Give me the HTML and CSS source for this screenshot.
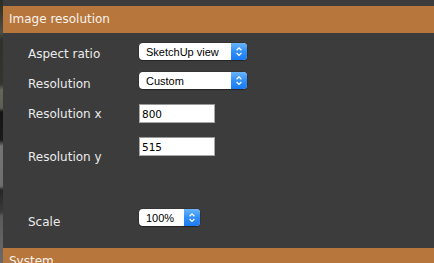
FILE: index.html
```html
<!DOCTYPE html>
<html lang="en">
<head>
  <meta charset="UTF-8">
  <meta name="viewport" content="width=device-width, initial-scale=1.0">
  <title>Image resolution</title>
  <link rel="stylesheet" href="styles.css">
</head>
<body>
  <div class="window">
    <div class="backdrop"></div>
    <div class="panel">
      <div class="section-title">Image resolution</div>

      <div class="settings">
        <label class="label drop-4" for="aspect">Aspect ratio</label>
        <div class="select wide">
          <select id="aspect"><option>SketchUp view</option></select>
          <span class="stepper">
            <svg width="16" height="17" viewBox="0 0 16 17"><path d="M5.6 7.2 L8 4.8 L10.4 7.2 M5.6 10 L8 12.4 L10.4 10" fill="none" stroke="#fff" stroke-width="1.3"/></svg>
          </span>
        </div>

        <label class="label drop-5" for="resolution">Resolution</label>
        <div class="select wide">
          <select id="resolution"><option>Custom</option></select>
          <span class="stepper">
            <svg width="16" height="17" viewBox="0 0 16 17"><path d="M5.6 7.2 L8 4.8 L10.4 7.2 M5.6 10 L8 12.4 L10.4 10" fill="none" stroke="#fff" stroke-width="1.3"/></svg>
          </span>
        </div>

        <label class="label drop-3" for="resX">Resolution x</label>
        <input class="field" type="text" id="resX" value="800">

        <label class="label drop-13" for="resY">Resolution y</label>
        <input class="field" type="text" id="resY" value="515">

        <label class="label drop-6" for="scale">Scale</label>
        <div class="select narrow">
          <select id="scale"><option>100%</option></select>
          <span class="stepper">
            <svg width="16" height="17" viewBox="0 0 16 17"><path d="M5.6 7.2 L8 4.8 L10.4 7.2 M5.6 10 L8 12.4 L10.4 10" fill="none" stroke="#fff" stroke-width="1.3"/></svg>
          </span>
        </div>
      </div>

      <div class="section-title">System</div>
    </div>
  </div>
</body>
</html>
```

FILE: styles.css
```css
body {
  margin: 0;
  height: 263px;
  overflow: hidden;
  background-color: #3c3c3c;
  font-family: "DejaVu Sans", Verdana, sans-serif;
}

.window {
  display: flex;
  height: 263px;
}

/* bit of the viewport peeking out on the left */
.backdrop {
  width: 3px;
  flex-shrink: 0;
  background: linear-gradient(to bottom,
    #2b2b27 0px, #38382f 12px, #4f4f48 32px, #2f2f2c 40px,
    #35352f 84px, #66665a 90px, #5d5d52 108px, #141414 112px,
    #1a1a1a 140px, #747474 146px, #6e6e6e 186px, #262626 190px,
    #3a3a3a 212px, #5a5a5a 216px, #6a6a6a 263px);
}

.panel {
  flex: 1;
  padding-top: 6px;
}

.section-title {
  height: 27px;
  box-sizing: border-box;
  padding: 6px 6px 0;
  background-color: #b7763c;
  color: #f7f3ee;
  font-size: 12px;
  line-height: 15px;
}

.settings {
  display: grid;
  grid-template-columns: 111px auto;
  grid-template-rows: 29px 32px 33px 72px 39px;
  align-items: start;
  justify-items: start;
  padding: 10px 0 0 25px;
}

.label {
  color: #ebebeb;
  font-size: 12px;
  line-height: 15px;
}

.drop-3 { margin-top: 3px; }
.drop-4 { margin-top: 4px; }
.drop-5 { margin-top: 5px; }
.drop-6 { margin-top: 6px; }
.drop-13 { margin-top: 13px; }

.select {
  display: flex;
  height: 17px;
  background-color: #fff;
  border-radius: 4px;
  overflow: hidden;
  box-shadow: 0 0 0 0.5px rgba(0, 0, 0, 0.25), 0 1px 1px rgba(0, 0, 0, 0.3);
}

.select.wide {
  width: 108px;
}

.select.narrow {
  width: 61px;
}

.select select {
  flex: 1;
  min-width: 0;
  appearance: none;
  -webkit-appearance: none;
  border: none;
  outline: none;
  background: transparent;
  margin: 0;
  padding: 0 0 0 7px;
  height: 17px;
  font-family: "Liberation Sans", Arial, sans-serif;
  font-size: 11px;
  color: #000;
}

.stepper {
  width: 16px;
  height: 17px;
  flex-shrink: 0;
  display: flex;
  background: linear-gradient(to bottom, #6ab4fc, #3190f8 50%, #1a7bf3);
}

.field {
  width: 76px;
  height: 19px;
  box-sizing: border-box;
  margin: 0;
  padding: 0 2px;
  border: 1px solid #a8a8a8;
  border-top-color: #999;
  background-color: #fff;
  font-family: "DejaVu Sans", Verdana, sans-serif;
  font-size: 10.5px;
  color: #000;
  outline: none;
}
```
